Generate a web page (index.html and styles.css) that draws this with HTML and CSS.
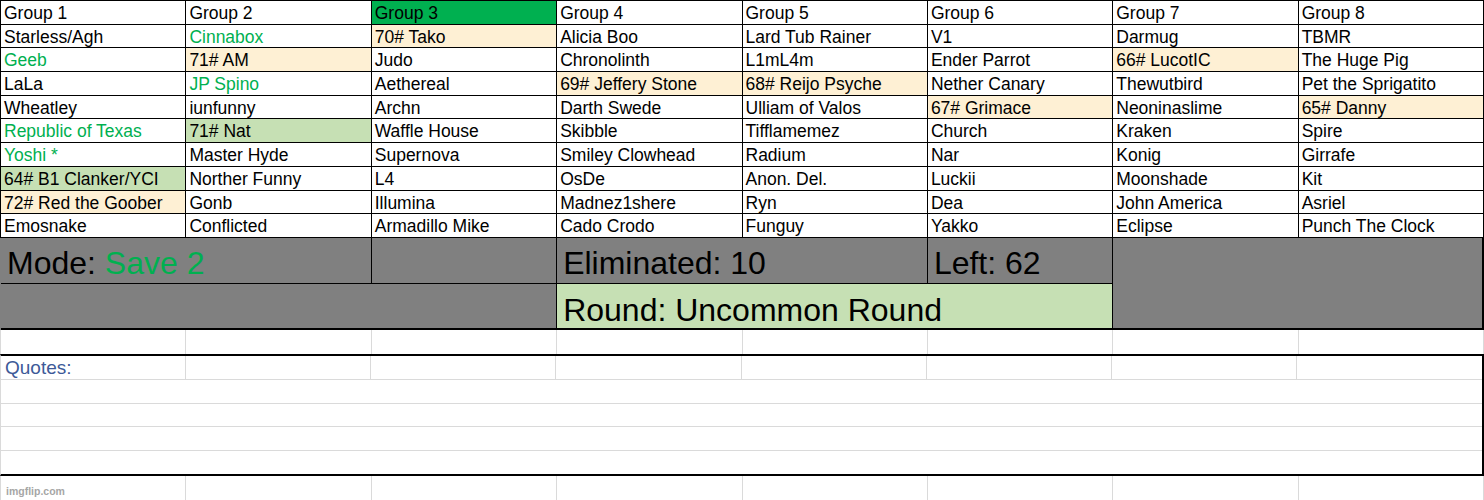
FILE: index.html
```html
<!DOCTYPE html>
<html>
<head>
<meta charset="utf-8">
<link rel="stylesheet" href="styles.css">
</head>
<body>
<div class="sheet">
  <div class="names">
    <div class="c">Group 1</div><div class="c">Group 2</div><div class="c hd3">Group 3</div><div class="c">Group 4</div><div class="c">Group 5</div><div class="c">Group 6</div><div class="c">Group 7</div><div class="c">Group 8</div>

    <div class="c">Starless/Agh</div><div class="c g">Cinnabox</div><div class="c pe">70# Tako</div><div class="c">Alicia Boo</div><div class="c">Lard Tub Rainer</div><div class="c">V1</div><div class="c">Darmug</div><div class="c">TBMR</div>

    <div class="c g">Geeb</div><div class="c pe">71# AM</div><div class="c">Judo</div><div class="c">Chronolinth</div><div class="c">L1mL4m</div><div class="c">Ender Parrot</div><div class="c pe">66# LucotIC</div><div class="c">The Huge Pig</div>

    <div class="c">LaLa</div><div class="c g">JP Spino</div><div class="c">Aethereal</div><div class="c pe">69# Jeffery Stone</div><div class="c pe">68# Reijo Psyche</div><div class="c">Nether Canary</div><div class="c">Thewutbird</div><div class="c">Pet the Sprigatito</div>

    <div class="c">Wheatley</div><div class="c">iunfunny</div><div class="c">Archn</div><div class="c">Darth Swede</div><div class="c">Ulliam of Valos</div><div class="c pe">67# Grimace</div><div class="c">Neoninaslime</div><div class="c pe">65# Danny</div>

    <div class="c g">Republic of Texas</div><div class="c lg">71# Nat</div><div class="c">Waffle House</div><div class="c">Skibble</div><div class="c">Tifflamemez</div><div class="c">Church</div><div class="c">Kraken</div><div class="c">Spire</div>

    <div class="c g">Yoshi *</div><div class="c">Master Hyde</div><div class="c">Supernova</div><div class="c">Smiley Clowhead</div><div class="c">Radium</div><div class="c">Nar</div><div class="c">Konig</div><div class="c">Girrafe</div>

    <div class="c lg">64# B1 Clanker/YCI</div><div class="c">Norther Funny</div><div class="c">L4</div><div class="c">OsDe</div><div class="c">Anon. Del.</div><div class="c">Luckii</div><div class="c">Moonshade</div><div class="c">Kit</div>

    <div class="c pe">72# Red the Goober</div><div class="c">Gonb</div><div class="c">Illumina</div><div class="c">Madnez1shere</div><div class="c">Ryn</div><div class="c">Dea</div><div class="c">John America</div><div class="c">Asriel</div>

    <div class="c">Emosnake</div><div class="c">Conflicted</div><div class="c">Armadillo Mike</div><div class="c">Cado Crodo</div><div class="c">Funguy</div><div class="c">Yakko</div><div class="c">Eclipse</div><div class="c">Punch The Clock</div>
  </div>

  <div class="summary">
    <div class="s s-mode">Mode:&nbsp;<span class="gt">Save 2</span></div>
    <div class="s s-empty"></div>
    <div class="s s-elim">Eliminated: 10</div>
    <div class="s s-left">Left: 62</div>
    <div class="s s-side"></div>
    <div class="s s-fill"></div>
    <div class="s s-round">Round: Uncommon Round</div>
  </div>

  <div class="blank">
    <div class="b"></div><div class="b"></div><div class="b"></div><div class="b"></div><div class="b"></div><div class="b"></div><div class="b"></div><div class="b"></div>
  </div>

  <div class="quotes">
    <div class="qhead">
      <div class="b qlabel">Quotes:</div><div class="b"></div><div class="b"></div><div class="b"></div><div class="b"></div><div class="b"></div><div class="b"></div><div class="b last"></div>
    </div>
    <div class="qline"></div>
    <div class="qline"></div>
    <div class="qline"></div>
    <div class="qline end"></div>
  </div>

  <div class="blank foot">
    <div class="b wm">imgflip.com</div><div class="b"></div><div class="b"></div><div class="b"></div><div class="b"></div><div class="b"></div><div class="b"></div><div class="b"></div>
  </div>
</div>
</body>
</html>
```

FILE: styles.css
```css
* {
  box-sizing: border-box;
  margin: 0;
  padding: 0;
}

html, body {
  margin: 0;
  background: #ffffff;
  width: 1484px;
  height: 500px;
  overflow: hidden;
  font-family: "Liberation Sans", Arial, sans-serif;
  color: #000;
}

.sheet {
  width: 1484px;
}

/* names table */
.names {
  display: grid;
  grid-template-columns: repeat(8, 1fr);
  grid-auto-rows: 23.7px;
  border-left: 1px solid #000;
  border-top: 1px solid #000;
}

.c {
  border-right: 1px solid #000;
  border-bottom: 1px solid #000;
  font-size: 17.5px;
  line-height: 24.5px;
  padding-left: 3px;
  white-space: nowrap;
  overflow: hidden;
}

.g { color: #00b050; }
.pe { background: #fef0d4; }
.lg { background: #c6e0b4; }
.hd3 { background: #00b050; }

/* summary block */
.summary {
  display: grid;
  grid-template-columns: repeat(8, 1fr);
  grid-template-rows: 46px 46px;
  border-left: 1px solid #808080;
}

.s {
  background: #808080;
  border-right: 1px solid #000;
  border-bottom: 1px solid #000;
  font-size: 32px;
  line-height: 36px;
  padding: 5px 0 0 6px;
  display: flex;
  align-items: center;
  white-space: nowrap;
}

.gt { color: #00b050; }

.s-mode  { grid-column: 1 / 3; grid-row: 1; }
.s-empty { grid-column: 3 / 4; grid-row: 1; }
.s-elim  { grid-column: 4 / 6; grid-row: 1; }
.s-left  { grid-column: 6 / 7; grid-row: 1; }
.s-side  { grid-column: 7 / 9; grid-row: 1 / 3; border-bottom-width: 2px; border-right-width: 2px; }
.s-fill  { grid-column: 1 / 4; grid-row: 2; border-bottom-width: 2px; }
.s-round { grid-column: 4 / 7; grid-row: 2; background: #c6e0b4; border-bottom-width: 2px; padding-top: 9px; }

/* blank rows */
.blank {
  display: grid;
  grid-template-columns: repeat(8, 1fr);
  height: 24px;
  border-left: 1px solid #dadada;
}

.b {
  border-right: 1px solid #dadada;
}

.foot {
  height: 25px;
}

.wm {
  color: #a6a6a6;
  font-size: 10.5px;
  font-weight: bold;
  padding: 8px 0 0 5px;
  line-height: 14px;
}

/* quotes box */
.quotes {
  border-top: 2px solid #000;
  border-right: 2px solid #000;
  border-bottom: 2px solid #000;
  border-left: 1px solid #dadada;
}

.qhead {
  display: grid;
  grid-template-columns: repeat(8, 1fr);
  height: 24px;
  border-bottom: 1px solid #dadada;
}

.qhead .last {
  border-right: none;
}

.qlabel {
  color: #3d5a98;
  font-size: 19px;
  line-height: 24px;
  padding-left: 4px;
  white-space: nowrap;
}

.qline {
  height: 23.75px;
  border-bottom: 1px solid #dadada;
}

.qline.end {
  border-bottom: none;
  height: 22.75px;
}
```
